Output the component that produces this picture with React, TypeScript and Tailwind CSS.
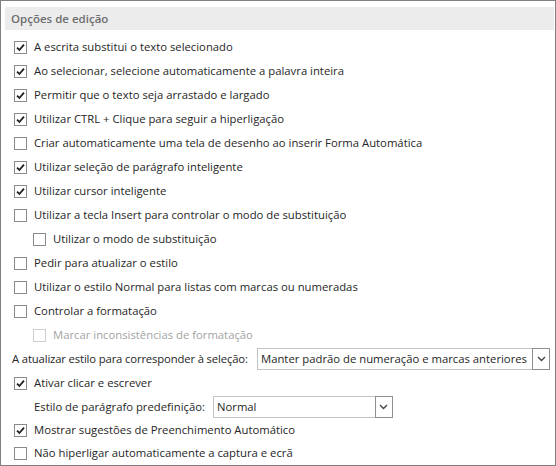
const Check = ({ checked = false, disabled = false }: { checked?: boolean; disabled?: boolean }) => (
  <span
    className={`flex items-center justify-center w-[13px] h-[13px] shrink-0 border bg-white ${
      disabled ? "border-[#cfcfcf]" : "border-[#8a8a8a]"
    }`}
  >
    {checked && (
      <svg width="9" height="9" viewBox="0 0 9 9">
        <path d="M1 4.6 L3.4 7 L8 1.6" fill="none" stroke="#222" strokeWidth="1.8" />
      </svg>
    )}
  </span>
);

const Row = ({
  label,
  checked = false,
  indent = false,
  disabled = false,
  tight = false,
}: {
  label: string;
  checked?: boolean;
  indent?: boolean;
  disabled?: boolean;
  tight?: boolean;
}) => (
  <div
    className={`flex items-center gap-[7px] whitespace-nowrap ${tight ? "h-[23px]" : "h-[24px]"} ${
      indent ? "pl-[32px]" : "pl-[13px]"
    }`}
  >
    <Check checked={checked} disabled={disabled} />
    <span className={disabled ? "text-[#a3a3a3]" : "text-[#262626]"}>{label}</span>
  </div>
);

const Select = ({ value, width }: { value: string; width: string }) => (
  <div className={`flex items-stretch shrink-0 h-[22px] border border-[#c3c3c3] bg-white ${width}`}>
    <span className="flex-1 pl-[3px] leading-[20px] text-[#262626]">{value}</span>
    <span className="flex items-center justify-center w-[18px] border border-[#8f8f8f] -m-px bg-white">
      <svg width="9" height="6" viewBox="0 0 9 6">
        <path d="M1 1 L4.5 4.5 L8 1" fill="none" stroke="#444" strokeWidth="1.4" />
      </svg>
    </span>
  </div>
);

export default function App() {
  return (
    <div className="w-[556px] h-[466px] border border-[#808080] bg-white text-[11.3px] font-['Open_Sans','Noto_Sans',sans-serif] overflow-hidden">
      <div className="mt-[6px] ml-[4px] mr-[1px] h-[23px] bg-[#ececec] pl-[6px] flex items-center text-[#6e6e6e] font-semibold text-[11.5px]">
        Opções de edição
      </div>
      <div className="mt-[5px] flex flex-col">
        <Row checked label="A escrita substitui o texto selecionado" />
        <Row checked label="Ao selecionar, selecione automaticamente a palavra inteira" />
        <Row checked label="Permitir que o texto seja arrastado e largado" />
        <Row checked label="Utilizar CTRL + Clique para seguir a hiperligação" />
        <Row label="Criar automaticamente uma tela de desenho ao inserir Forma Automática" />
        <Row checked label="Utilizar seleção de parágrafo inteligente" />
        <Row checked label="Utilizar cursor inteligente" />
        <Row label="Utilizar a tecla Insert para controlar o modo de substituição" />
        <Row indent label="Utilizar o modo de substituição" />
        <Row label="Pedir para atualizar o estilo" />
        <Row label="Utilizar o estilo Normal para listas com marcas ou numeradas" />
        <Row label="Controlar a formatação" />
        <Row indent disabled label="Marcar inconsistências de formatação" />
        <div className="flex items-center h-[24px] pl-[11px] gap-[9px] whitespace-nowrap">
          <span className="w-[236px] tracking-[-0.15px] text-[#262626]">
            A atualizar estilo para corresponder à seleção:
          </span>
          <Select value="Manter padrão de numeração e marcas anteriores" width="w-[293px]" />
        </div>
        <Row checked label="Ativar clicar e escrever" />
        <div className="flex items-center h-[24px] pl-[33px] gap-[8px] whitespace-nowrap">
          <span className="text-[#262626]">Estilo de parágrafo predefinição:</span>
          <Select value="Normal" width="w-[180px]" />
        </div>
        <Row checked tight label="Mostrar sugestões de Preenchimento Automático" />
        <Row tight label="Não hiperligar automaticamente a captura e ecrã" />
      </div>
    </div>
  );
}
